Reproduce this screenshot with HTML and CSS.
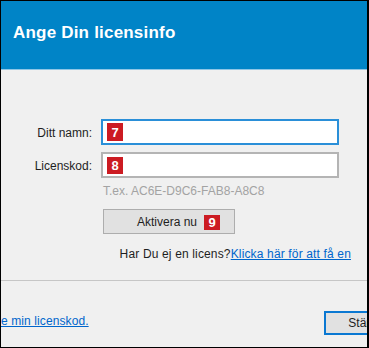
FILE: index.html
```html
<!DOCTYPE html>
<html lang="sv">
<head>
<meta charset="utf-8">
<title>Ange Din licensinfo</title>
<link rel="stylesheet" href="styles.css">
</head>
<body>
<div class="window">
  <header class="header">
    <h1 class="title">Ange Din licensinfo</h1>
  </header>
  <main class="main">
    <div class="form">
      <label class="label">Ditt namn:</label>
      <div class="field field-focus"><span class="badge badge-tall">7</span></div>
      <label class="label">Licenskod:</label>
      <div class="field"><span class="badge">8</span></div>
      <div class="hint">T.ex. AC6E-D9C6-FAB8-A8C8</div>
      <div class="btn-row">
        <button class="btn">Aktivera nu<span class="badge badge-btn">9</span></button>
      </div>
    </div>
    <div class="nolicense">
      <span>Har Du ej en licens?</span><a class="link" href="#">Klicka här för att få en</a>
    </div>
  </main>
  <footer class="footer">
    <a class="link footer-link" href="#">e min licenskod.</a>
    <button class="btn btn-default">Stäng</button>
  </footer>
</div>
</body>
</html>
```

FILE: styles.css
```css
* { box-sizing: border-box; }
html, body { margin: 0; padding: 0; }
body {
  font-family: "Liberation Sans", Arial, sans-serif;
  font-size: 12px;
  color: #1e1e1e;
  background: #f0f0f0;
}
.window {
  width: 369px;
  height: 348px;
  border: 1px solid #000;
  border-right-width: 2px;
  background: #f0f0f0;
  overflow: hidden;
  display: flex;
  flex-direction: column;
}
.header {
  height: 69px;
  flex: none;
  background: #0084c7;
  border-bottom: 1px solid #8fc6e6;
  padding: 22px 0 0 12px;
}
.title {
  margin: 0;
  color: #fff;
  font-size: 17px;
  line-height: 20px;
  font-weight: bold;
  letter-spacing: 0.2px;
}
.main {
  height: 210px;
  flex: none;
  padding-top: 49px;
}
.form {
  display: grid;
  grid-template-columns: 91px 238px;
  column-gap: 9px;
  row-gap: 7px;
  grid-auto-rows: auto;
}
.label {
  align-self: center;
  text-align: right;
  line-height: 14px;
  padding-top: 1px;
}
.field {
  height: 26px;
  background: #fff;
  border: 2px solid #b4b4b4;
  display: flex;
  align-items: center;
  padding-left: 4px;
}
.field-focus { border-color: #2a8fd8; }
.badge {
  display: inline-flex;
  align-items: center;
  justify-content: center;
  width: 16px;
  height: 17px;
  background: #cc1b22;
  color: #fff;
  font-weight: bold;
  font-size: 13px;
  line-height: 1;
}
.badge-tall { height: 18px; }
.hint {
  grid-column: 2;
  color: #a3a3a3;
  line-height: 14px;
  padding-left: 2px;
  margin-top: -1px;
}
.btn-row {
  grid-column: 2;
  padding-left: 2px;
  margin-top: 4px;
}
.btn {
  position: relative;
  font-family: inherit;
  font-size: 12px;
  color: #1e1e1e;
  width: 132px;
  height: 25px;
  background: #e1e1e1;
  border: 1.5px solid #adadad;
  padding: 0 4px 0 0;
  line-height: 14px;
}
.badge-btn {
  position: absolute;
  left: 100px;
  top: 5px;
  height: 15px;
}
.nolicense {
  display: flex;
  justify-content: flex-end;
  padding-right: 16px;
  margin-top: 13px;
  line-height: 14px;
  letter-spacing: 0.15px;
}
.link {
  color: #0066cc;
  text-decoration: underline;
}
.footer {
  flex: 1;
  border-top: 1px solid #c6c6c6;
  display: grid;
  grid-template-columns: 323px 78px;
  padding-top: 30px;
  align-items: start;
}
.footer-link {
  line-height: 14px;
  margin-top: 3px;
  letter-spacing: 0.1px;
}
.btn-default {
  width: 78px;
  height: 24px;
  border: 2px solid #0a78d2;
  padding: 0 0 0 2px;
}
```
